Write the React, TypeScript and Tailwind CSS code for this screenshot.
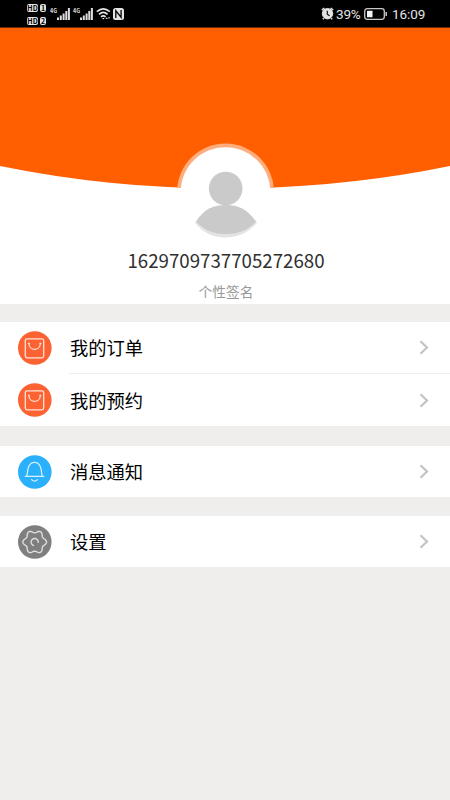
import type { ReactNode } from "react";

const fontStack = "font-['Noto_Sans_CJK_SC','Noto_Sans',sans-serif]";

// six rounded teeth, the first one pointing right
const gearPath =
  Array.from({ length: 72 }, (_, i) => {
    const a = (i / 72) * Math.PI * 2;
    const r = 10.5 + 1.35 * Math.cos(6 * a);
    return `${i ? "L" : "M"}${(16.7 + r * Math.cos(a)).toFixed(2)} ${(17 + r * Math.sin(a)).toFixed(2)}`;
  }).join("") + "Z";

function HdBadge({ sim }: { sim: string }) {
  return (
    <div className="flex h-2 gap-[2px] text-[7px] leading-[8px] font-bold text-black">
      <span className="w-[11px] rounded-[2px] bg-[#e4e4e4] text-center">HD</span>
      <span className="w-[6px] rounded-[2px] bg-[#e4e4e4] text-center">{sim}</span>
    </div>
  );
}

function Signal() {
  return (
    <svg className="overflow-visible" width="20" height="18" viewBox="0 -2 20 18" fill="#dedede">
      <text x="0" y="5.5" fontSize="6" fontWeight="700" textLength="7" lengthAdjust="spacingAndGlyphs">
        4G
      </text>
      <rect x="7" y="10.5" width="2" height="2.5" />
      <rect x="9.8" y="8.5" width="2" height="4.5" />
      <rect x="12.6" y="6.5" width="2" height="6.5" />
      <rect x="15.3" y="4" width="2" height="9" />
      <rect x="17.9" y="1" width="2" height="12" />
    </svg>
  );
}

function StatusBar() {
  return (
    <header className="flex h-7 items-center justify-between border-b border-[#6b2a00] bg-black pr-[25px] pl-[27px] text-[#e4e4e4]">
      <div className="flex items-center">
        <div className="mt-px flex flex-col gap-[5px]">
          <HdBadge sim="1" />
          <HdBadge sim="2" />
        </div>
        <div className="ml-[4px] flex gap-[3px]">
          <Signal />
          <Signal />
        </div>
        <svg className="ml-[3px]" width="15" height="14" viewBox="0 0 15 14" fill="none" stroke="#e4e4e4" strokeWidth="1.6">
          <path d="M.8 4.6Q7.3-1 13.8 4.6M3 7.3Q7.3 3.5 11.6 7.3M5 9.8Q7.3 7.8 9.6 9.8" />
          <path d="M6 11h2.6L7.3 12.6z" fill="#e4e4e4" stroke="none" />
          <path d="M9.5 12l1.2-1.7 1.2 1.7zm2.3-1.7h2.4L13 12z" fill="#c9c9c9" stroke="none" />
        </svg>
        <svg className="ml-[2px]" width="11" height="12" viewBox="0 0 11 12">
          <rect width="11" height="12" rx="2.5" fill="#e4e4e4" />
          <path d="M2.8 10V2.7L8.1 9.3V2" fill="none" stroke="#111" strokeWidth="1.4" />
        </svg>
      </div>
      <div className="flex items-center text-[13.5px] leading-7">
        <svg width="13" height="13" viewBox="0 0 13 13" fill="none" stroke="#e4e4e4">
          <circle cx="6.5" cy="6.7" r="5.2" fill="#e4e4e4" />
          <path d="M.9 3.2L3.3 1M9.7 1l2.4 2.2M2.7 11.2l-.8 1M10.3 11.2l.8 1" strokeWidth="1.6" />
          <path d="M6.3 3.8v3.4l2.3 1.6" stroke="#111" strokeWidth="1.2" />
        </svg>
        <span className="ml-[2px] w-[27px] font-[Roboto,sans-serif] tracking-[-0.2px]">39%</span>
        <svg className="ml-[1px]" width="24" height="12" viewBox="0 0 24 12">
          <rect x=".7" y=".7" width="19.6" height="10.6" rx="2.5" fill="none" stroke="#c8c8c8" strokeWidth="1.3" />
          <rect x="3" y="2.7" width="5.5" height="6.6" rx=".6" fill="#f5f5f5" />
          <path d="M22.2 4v4" stroke="#c8c8c8" strokeWidth="1.5" />
        </svg>
        <span className="ml-[4px] w-[33px] text-right font-[Roboto,sans-serif] tracking-[-0.1px]">16:09</span>
      </div>
    </header>
  );
}

function Banner() {
  return (
    <svg className="block" width="450" height="216" viewBox="0 28 450 216">
      <path d="M0 28H450V166Q340 188.5 225 188.5Q110 188.5 0 166Z" fill="#ff5f00" />
      <clipPath id="rim">
        <rect x="170" y="130" width="112" height="58" />
      </clipPath>
      <circle cx="225.5" cy="192" r="48.5" fill="#ffad7d" clipPath="url(#rim)" />
      <circle cx="225.5" cy="192" r="44.8" fill="#fff" />
      <path d="M194.5 222Q206 237.5 225.5 237.5T257.5 222Z" fill="#e3e3e3" />
      <path d="M196 221.5C204 209 213 205 225.8 205S247 209 256 221.5C248 230 239 234 226 234S204 230 196 221.5Z" fill="#cacaca" />
      <circle cx="225.7" cy="188.5" r="16.8" fill="#cacaca" />
    </svg>
  );
}

function BagIcon() {
  return (
    <svg width="34" height="34" viewBox="0 0 34 34" fill="none" stroke="#ffe3d9" strokeWidth="1.3">
      <circle cx="16.8" cy="17" r="16.8" fill="#fc6232" stroke="none" />
      <rect x="7.3" y="7.8" width="18.4" height="19" rx="1.8" />
      <path d="M10.8 12.2C11.2 20.5 22 20.5 22.4 12.2" />
      <path d="M9.9 12.3h1.8M21.5 12.3h1.8" />
    </svg>
  );
}

function BellIcon() {
  return (
    <svg width="34" height="34" viewBox="0 0 34 34" fill="none" stroke="#d8f1ff" strokeWidth="1.2" strokeLinecap="round">
      <circle cx="16.8" cy="17" r="16.8" fill="#2bb1fb" stroke="none" />
      <path d="M7.2 21.3H25.9M8.8 21.1C9.6 18 9.4 14.8 10.6 11.8C11.8 8.8 13.7 7.3 16.5 7.3S21.2 8.8 22.4 11.8C23.6 14.8 23.4 18 24.2 21.1" />
      <path d="M13.6 24.6Q16.6 27.6 19.6 24.6" />
    </svg>
  );
}

function GearIcon() {
  return (
    <svg width="34" height="34" viewBox="0 0 34 34" fill="none" stroke="#dedede" strokeWidth="1.4" strokeLinejoin="round">
      <circle cx="16.8" cy="17" r="16.8" fill="#7f7f7f" stroke="none" />
      <path d={gearPath} />
      <path d="M16.1 20.6A3.6 3.6 0 1 1 20.2 17.8" />
    </svg>
  );
}

function Row({ icon, label, divider }: { icon: ReactNode; label: string; divider?: boolean }) {
  return (
    <a href="#" className="flex h-full items-center bg-white pl-[18px]">
      {icon}
      <div
        className={`ml-[17px] flex h-full flex-1 items-center justify-between pr-[20px] ${
          divider ? "border-b border-[#eeeeee]" : ""
        }`}
      >
        <span className="pl-px text-[18.3px] leading-none text-black">{label}</span>
        <svg width="11" height="15" viewBox="0 0 11 15" fill="none" stroke="#c3c3c3" strokeWidth="2.2">
          <path d="M1.5 1.3L8 7.5L1.5 13.7" />
        </svg>
      </div>
    </a>
  );
}

export default function App() {
  return (
    <div className={`h-[800px] w-[450px] overflow-hidden bg-[#efeeec] ${fontStack}`}>
      <StatusBar />
      <section className="h-[276px] bg-white text-center">
        <Banner />
        <p className="mt-[6px] pl-[2px] text-[18.7px] leading-[20px] text-[#303030]">1629709737705272680</p>
        <p className="mt-[14px] pl-[2px] text-[13.7px] leading-[14px] text-[#999999]">个性签名</p>
      </section>
      <nav>
        <div className="mt-[18px] h-[52px]">
          <Row icon={<BagIcon />} label="我的订单" divider />
        </div>
        <div className="h-[52px]">
          <Row icon={<BagIcon />} label="我的预约" />
        </div>
        <div className="mt-[20px] h-[51px]">
          <Row icon={<BellIcon />} label="消息通知" />
        </div>
        <div className="mt-[19px] h-[51px]">
          <Row icon={<GearIcon />} label="设置" />
        </div>
      </nav>
    </div>
  );
}
